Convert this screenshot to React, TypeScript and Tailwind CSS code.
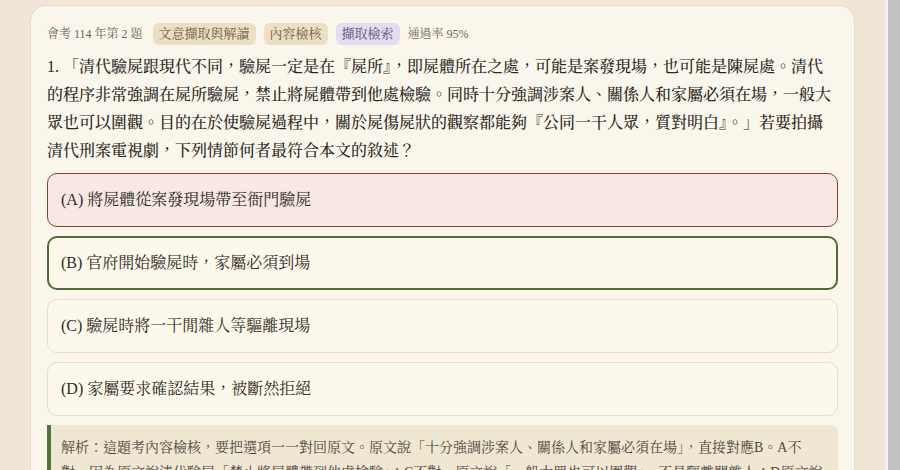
import React from "react";

const serif = "font-['Liberation_Serif','Noto_Serif_CJK_TC','Noto_Serif_TC','Noto_Sans_CJK_TC',serif]";

const options = [
  { key: "A", text: "將屍體從案發現場帶至衙門驗屍", state: "wrong" },
  { key: "B", text: "官府開始驗屍時，家屬必須到場", state: "right" },
  { key: "C", text: "驗屍時將一干閒雜人等驅離現場", state: "none" },
  { key: "D", text: "家屬要求確認結果，被斷然拒絕", state: "none" },
];

function Option({ k, text, state }: { k: string; text: string; state: string }) {
  const cls =
    state === "wrong"
      ? "border border-[#8e3b30] bg-[#f8e8e4] py-[14px] px-[13px]"
      : state === "right"
        ? "border-2 border-[#4d6b3b] bg-[#fdf8ec] py-[13px] px-[12px]"
        : "border border-[#e6dccb] bg-[#fdf8ec] py-[14px] px-[13px]";
  return (
    <div className={`rounded-[10px] ${cls} text-[16px] leading-6 text-[#2f2b26]`}>
      ({k}) {text}
    </div>
  );
}

export default function App() {
  return (
    <div className={`flex h-[470px] overflow-hidden bg-[#f0e6d8] ${serif}`}>
      <div className="min-w-0 flex-1 px-[30px] pt-[5px]">
        <div className="rounded-2xl border border-[#e7dcc8] bg-[#faf6ec] px-4 pt-[17px] pb-6">
          <div className="flex items-center gap-2 text-[12px] text-[#6e655a]">
            <span className="mr-0.5">會考 114 年第 2 題</span>
            <span className="rounded-md bg-[#ecdfc3] px-1.5 py-[3px] text-[13px] leading-4 text-[#6b5a3e]">文意擷取與解讀</span>
            <span className="rounded-md bg-[#ecdfc3] px-1.5 py-[3px] text-[13px] leading-4 text-[#6b5a3e]">內容檢核</span>
            <span className="rounded-md bg-[#e4dcef] px-1.5 py-[3px] text-[13px] leading-4 text-[#5b4e74]">擷取檢索</span>
            <span>通過率 95%</span>
          </div>

          <p className="mt-2 text-[16px] font-medium leading-7 text-[#2b2824]">
            1. 「清代驗屍跟現代不同，驗屍一定是在『屍所』，即屍體所在之處，可能是案發現場，也可能是陳屍處。清代的程序非常強調在屍所驗屍，禁止將屍體帶到他處檢驗。同時十分強調涉案人、關係人和家屬必須在場，一般大眾也可以圍觀。目的在於使驗屍過程中，關於屍傷屍狀的觀察都能夠『公同一干人眾，質對明白』。」若要拍攝清代刑案電視劇，下列情節何者最符合本文的敘述？
          </p>

          <div className="mt-[8px] flex flex-col gap-[9px]">
            {options.map((o) => (
              <Option key={o.key} k={o.key} text={o.text} state={o.state} />
            ))}
          </div>

          <div className="mt-[9px] rounded-r-lg border-l-4 border-[#55733f] bg-[#f0e7d3] px-[10px] py-[10px] text-[14px] leading-[25px] text-[#4f463b]">
            解析：這題考內容檢核，要把選項一一對回原文。原文說「十分強調涉案人、關係人和家屬必須在場」，直接對應B。A不對，因為原文說清代驗屍「禁止將屍體帶到他處檢驗」；C不對，原文說「一般大眾也可以圍觀」，不是驅離閒雜人；D原文說要「質對明白」，不會斷然拒絕家屬。
          </div>
        </div>
      </div>
      <div className="flex w-[15px] shrink-0 bg-[#f1f1f1] pl-[3px]">
        <div className="flex-1 bg-[#c1c1c1]" />
      </div>
    </div>
  );
}
